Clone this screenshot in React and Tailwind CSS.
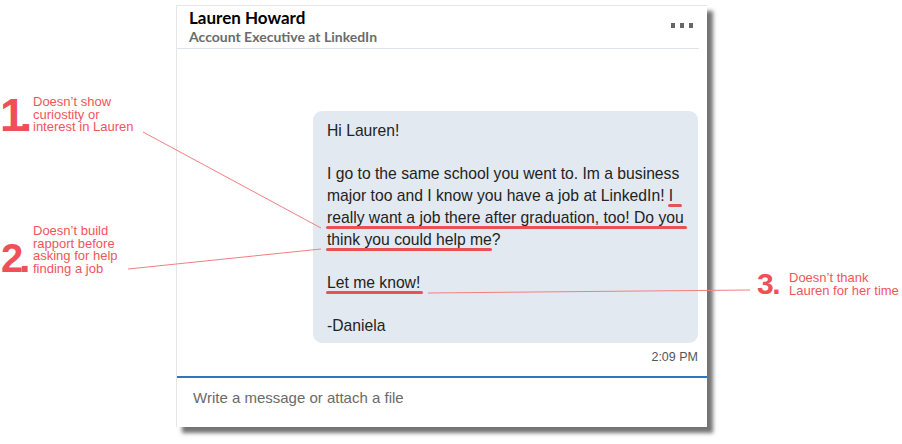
import React from "react";

const sans = "font-['Liberation_Sans',Arial,sans-serif]";

function Mark({ children, extra = "right-[-2px]" }) {
  return (
    <span className="relative">
      {children}
      <span className={`absolute bottom-[-3px] left-[-1px] h-[3px] rounded-full bg-[#ea5157] ${extra}`} />
    </span>
  );
}

function ChatCard() {
  return (
    <div className="flex h-[422px] w-[531px] flex-col border-l border-t border-[#e6e6e6] bg-white shadow-[6px_6px_4px_rgba(0,0,0,0.55)]">
      {/* header */}
      <div className="flex h-[42px] shrink-0 justify-between pl-[12px] pr-[14px] pt-[2px] font-['Lato','Noto_Sans',sans-serif]">
        <div>
          <div className="text-[17px] font-bold leading-[20px] text-black">Lauren Howard</div>
          <div className="text-[14px] font-bold leading-[18px] text-[#6b6b6b]">Account Executive at LinkedIn</div>
        </div>
        <div className="mt-[15px] flex gap-[4.5px]">
          <span className="h-[4.5px] w-[4.5px] bg-[#666]" />
          <span className="h-[4.5px] w-[4.5px] bg-[#666]" />
          <span className="h-[4.5px] w-[4.5px] bg-[#666]" />
        </div>
      </div>
      <div className="mr-[8px] h-px bg-[#dfe4ea]" />

      {/* messages */}
      <div className={`flex flex-1 flex-col items-end pr-[9px] pt-[62px] ${sans}`}>
        <div className="w-[385px] whitespace-nowrap rounded-[9px] bg-[#e2e9f1] pb-[6px] pl-[14px] pt-[9px] text-[15.7px] leading-[21.7px] text-[#222]">
          <div>Hi Lauren!</div>
          <div>&nbsp;</div>
          <div>I go to the same school you went to. Im a business</div>
          <div>
            major too and I know you have a job at LinkedIn! <Mark extra="right-[-9px]">I</Mark>
          </div>
          <div>
            <Mark extra="right-[-3px]">really want a job there after graduation, too! Do you</Mark>
          </div>
          <div>
            <Mark extra="right-0">think you could help me</Mark>?
          </div>
          <div>&nbsp;</div>
          <div>
            <Mark extra="right-[-3px]">Let me know!</Mark>
          </div>
          <div>&nbsp;</div>
          <div>-Daniela</div>
        </div>
        <div className="mt-[6px] text-[12.5px] leading-[16px] text-[#555]">2:09 PM</div>
      </div>

      {/* composer */}
      <div className="h-[2px] shrink-0 bg-[#2c78bd]" />
      <div className={`h-[49px] shrink-0 pl-[16px] pt-[10px] text-[15px] leading-[20px] text-[#6a6a6a] ${sans}`}>
        Write a message or attach a file
      </div>
    </div>
  );
}

function Callouts() {
  const note = `absolute text-[13px] leading-[12.6px] text-[#f0555b] ${sans}`;
  const digit = "absolute font-['Liberation_Sans',Arial,sans-serif] font-bold leading-none text-[#ef4f56]";
  return (
    <>
      <span className={`${digit} left-0 top-[92px] text-[46px] tracking-[-6px]`}>1.</span>
      <div className={`${note} left-[33px] top-[96px]`}>
        Doesn’t show
        <br />
        curiostity or
        <br />
        interest in Lauren
      </div>

      <span className={`${digit} left-[1px] top-[238px] text-[40px] tracking-[-4px]`}>2.</span>
      <div className={`${note} left-[33px] top-[225px]`}>
        Doesn’t build
        <br />
        rapport before
        <br />
        asking for help
        <br />
        finding a job
      </div>

      <span className={`${digit} left-[757px] top-[269px] text-[30px] tracking-[-1.5px]`}>3.</span>
      <div className={`${note} left-[789px] top-[272px]`}>
        Doesn’t thank
        <br />
        Lauren for her time
      </div>
    </>
  );
}

export default function App() {
  return (
    <div className="relative h-[444px] w-[902px] overflow-hidden bg-white">
      <div className="pl-[176px] pt-[5px]">
        <ChatCard />
      </div>
      <Callouts />
      <svg className="pointer-events-none absolute left-0 top-0" width="902" height="444">
        <g stroke="#f27f80" strokeWidth="1" fill="none">
          <line x1="143" y1="132" x2="321" y2="228" />
          <line x1="128" y1="269" x2="321" y2="249" />
          <line x1="428" y1="293" x2="750" y2="290" />
        </g>
      </svg>
    </div>
  );
}
